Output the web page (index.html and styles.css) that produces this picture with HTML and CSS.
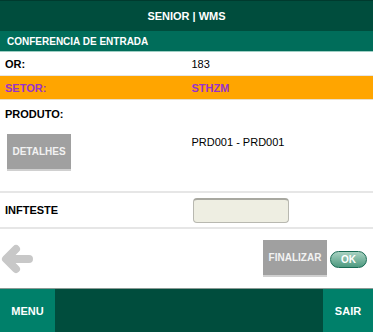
FILE: index.html
```html
<!DOCTYPE html>
<html>
<head>
  <title>Senior | WMS</title>
  <link rel="stylesheet" href="styles.css">
</head>
<body>
  <div class="page">
    <div class="header">SENIOR | WMS</div>
    <div class="subheader">CONFERENCIA DE ENTRADA</div>

    <div class="row row-or">
      <div class="label">OR:</div>
      <div class="value">183</div>
    </div>

    <div class="row row-setor">
      <div class="label">SETOR:</div>
      <div class="value">STHZM</div>
    </div>

    <div class="row row-produto">
      <div class="cell">
        <div class="label">PRODUTO:</div>
        <button class="btn-gray btn-detalhes">DETALHES</button>
      </div>
      <div class="value produto-value">PRD001 - PRD001</div>
    </div>

    <div class="row row-inf">
      <div class="label">INFTESTE</div>
      <div class="value"><input class="inf-input" type="text"></div>
    </div>

    <div class="actions">
      <svg class="back-arrow" width="32" height="30" viewBox="0 0 32 30">
        <path d="M28 15 H7 M15 5 L5 15 L15 25" fill="none" stroke="#c8c8c8" stroke-width="8" stroke-linecap="round" stroke-linejoin="round"/>
      </svg>
      <div class="action-buttons">
        <button class="btn-gray btn-finalizar">FINALIZAR</button>
        <button class="btn-ok">OK</button>
      </div>
    </div>

    <div class="footer">
      <div class="foot-btn">MENU</div>
      <div class="foot-mid"></div>
      <div class="foot-btn foot-sair">SAIR</div>
    </div>
  </div>
</body>
</html>
```

FILE: styles.css
```css
body {
  margin: 0;
  padding: 0;
  background-color: #fff;
  font-family: "Liberation Sans", Arial, sans-serif;
  font-size: 11px;
}

.page {
  width: 373px;
  height: 332px;
  display: flex;
  flex-direction: column;
}

.header {
  height: 31px;
  flex-shrink: 0;
  background-color: #004d3d;
  border-top: 1px solid #003a2e;
  box-sizing: border-box;
  color: #fff;
  font-weight: bold;
  display: flex;
  align-items: center;
  justify-content: center;
}

.subheader {
  height: 20px;
  flex-shrink: 0;
  background-color: #006d5a;
  color: #fff;
  font-size: 10px;
  font-weight: bold;
  display: flex;
  align-items: center;
  padding-left: 7px;
  border-bottom: 1px solid #9fcfc4;
}

.row {
  display: grid;
  grid-template-columns: 50% 50%;
  align-items: center;
  flex-shrink: 0;
}

.label {
  padding-left: 5px;
  font-weight: bold;
  color: #000;
}

.value {
  padding-left: 5px;
  color: #000;
}

.row-or {
  height: 23px;
  border-bottom: 1px solid #e6e6e6;
}

.row-setor {
  height: 23px;
  background-color: #ffa500;
  border-bottom: 1px solid #eadfca;
}

.row-setor .label,
.row-setor .value {
  color: #9932cc;
  font-weight: bold;
}

.row-produto {
  height: 91px;
  align-items: start;
  border-bottom: 2px solid #e6e6e6;
}

.row-produto .label {
  padding-top: 8px;
}

.produto-value {
  padding-top: 36px;
}

.btn-gray {
  background-color: #a0a0a0;
  color: #f2f2f2;
  font-family: "Liberation Sans", Arial, sans-serif;
  font-weight: bold;
  font-size: 10px;
  border: none;
  padding: 0;
  cursor: pointer;
}

.btn-detalhes {
  display: block;
  margin: 14px 0 0 7px;
  width: 64px;
  height: 37px;
  border-bottom: 2px solid #d0d0d0;
}

.row-inf {
  height: 34px;
  border-bottom: 2px solid #e6e6e6;
}

.inf-input {
  display: block;
  margin-left: 1px;
  width: 96px;
  height: 25px;
  box-sizing: border-box;
  background-color: #eeeee2;
  border: 1px solid #b8b8b0;
  border-top: 2px solid #a8a8a0;
  border-radius: 4px;
}

.actions {
  height: 59px;
  flex-shrink: 0;
  display: flex;
  align-items: center;
  justify-content: space-between;
  padding: 0 6px 0 1px;
  border-bottom: 1px solid #8a9a94;
}

.back-arrow {
  display: block;
}

.action-buttons {
  display: flex;
  align-items: center;
  gap: 3px;
}

.btn-finalizar {
  width: 64px;
  height: 37px;
  border-bottom: 2px solid #d0d0d0;
}

.btn-ok {
  width: 37px;
  height: 17px;
  border-radius: 9px;
  border: 1px solid #1a6b55;
  background: linear-gradient(#a9d2c2, #4e9a80);
  color: #fff;
  font-family: "Liberation Sans", Arial, sans-serif;
  font-weight: bold;
  font-size: 10px;
  padding: 0;
  margin-top: 1px;
  cursor: pointer;
}

.footer {
  flex: 1;
  display: flex;
}

.foot-btn {
  width: 55px;
  background-color: #00806a;
  color: #fff;
  font-weight: bold;
  display: flex;
  align-items: center;
  justify-content: center;
}

.foot-sair {
  width: 50px;
}

.foot-mid {
  flex: 1;
  background-color: #004d3d;
}
```
